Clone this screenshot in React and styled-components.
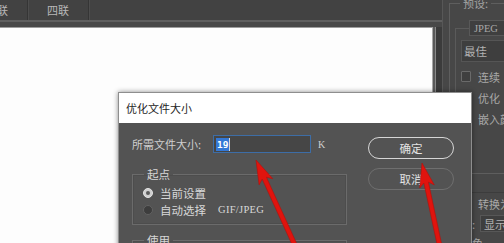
import React from 'react';
import styled, { createGlobalStyle } from 'styled-components';

const Global = createGlobalStyle`
  html, body { margin: 0; padding: 0; background: #3c3c3c; overflow: hidden; }
  body { font-family: "Noto Sans CJK SC", "Noto Sans", sans-serif; }
`;

const CJK = `"Noto Sans CJK SC", "Noto Sans", sans-serif`;
const LATIN = `"Liberation Serif", "Noto Sans CJK SC", serif`;

const Page = styled.div`
  position: relative;
  width: 504px;
  height: 243px;
  overflow: hidden;
  display: grid;
  grid-template-columns: 442px 62px;
  background: #3a3a3a;
`;

const Main = styled.div`
  display: flex;
  flex-direction: column;
  min-width: 0;
  overflow: hidden;
`;

const TabBar = styled.div`
  height: 20px;
  flex: none;
  display: flex;
  background: #424242;
  border-bottom: 2px solid #5f5f5f;
`;

const Tab = styled.div`
  flex: none;
  width: 60px;
  margin-left: ${p => p.$offset || 0}px;
  display: flex;
  align-items: center;
  justify-content: center;
  font-family: ${CJK};
  font-size: 11px;
  color: #b8b8b8;
  border-right: 1px solid #353535;
  box-shadow: 1px 0 0 #4d4d4d;
`;

const Strip = styled.div`
  height: 5px;
  flex: none;
  background: #484848;
`;

const CanvasWrap = styled.div`
  flex: 1;
  display: flex;
  padding-right: 9px;
  background: #3b3b3b;
`;

const Canvas = styled.div`
  flex: 1;
  background: #fdfdfd;
  border-top: 1px solid #9c9c9c;
  border-right: 1px solid #a8a8a8;
  box-shadow: 2px 0 0 #5a5a5a, 3px 0 0 #8a8a8a;
`;

const Side = styled.div`
  background: #474747;
  border-left: 1px solid #575757;
  overflow: hidden;
  padding-left: 6px;
  display: flex;
  flex-direction: column;
  font-family: ${CJK};
  font-size: 11px;
  color: #a9a9a9;
`;

const OuterSet = styled.fieldset`
  flex: none;
  margin: -4px 0 0 0;
  padding: 0 0 6px 5px;
  border: 1px solid #5e5e5e;
  border-right: none;
  min-width: 0;
  height: 178px;
  box-sizing: border-box;
`;

const PlainLegend = styled.legend`
  margin-left: 5px;
  padding: 0 3px;
  line-height: 14px;
  font-size: 11px;
  color: #a4a4a4;
`;

const InnerSet = styled.fieldset`
  margin: 10px 0 0 0;
  padding: 0 0 0 5px;
  border: 1px solid #5a5a5a;
  border-right: none;
  border-bottom: none;
  min-width: 0;
`;

const BoxLegend = styled.legend`
  margin-left: 8px;
  padding: 0 7px 0 4px;
  height: 16px;
  box-sizing: border-box;
  display: flex;
  align-items: center;
  background: #3f3f3f;
  border: 1px solid #585858;
  font-family: ${LATIN};
  font-size: 10.5px;
  color: #a8a8a8;
  width: 60px;
`;

const SelectBox = styled.div`
  margin-top: 4px;
  height: 22px;
  width: 60px;
  box-sizing: border-box;
  display: flex;
  align-items: center;
  padding-left: 2px;
  background: #3e3e3e;
  border: 1px solid #555;
  color: #b2b2b2;
  font-size: 11.5px;
`;

const CheckRow = styled.div`
  flex: none;
  height: 21px;
  display: flex;
  align-items: center;
  gap: 7px;
  margin-top: ${p => p.$first ? 4 : 0}px;
  white-space: nowrap;
`;

const CheckBox = styled.span`
  flex: none;
  width: 10px;
  height: 11px;
  box-sizing: border-box;
  border: 1px solid #6a6a6a;
  border-radius: 1px;
  background: #3f3f3f;
`;

const Lower = styled.div`
  flex: none;
  margin-top: 18px;
  border-top: 1px solid #3c3c3c;
  padding-left: 12px;
  display: flex;
  flex-direction: column;
`;

const FieldRow = styled.div`
  flex: none;
  height: 19px;
  display: flex;
  align-items: center;
  gap: 5px;
  white-space: nowrap;
`;

const SmallSelect = styled.span`
  height: 17px;
  width: 40px;
  box-sizing: border-box;
  padding-left: 3px;
  display: flex;
  align-items: center;
  background: #3e3e3e;
  border: 1px solid #575757;
  color: #b4b4b4;
`;

/* ---------- dialog ---------- */

const Dialog = styled.div`
  position: absolute;
  left: 118px;
  top: 92px;
  width: 354px;
  height: 170px;
  box-sizing: border-box;
  z-index: 2;
  background: #535353;
  border: 1px solid #8e8e8e;
  border-bottom: none;
  box-shadow: 0 0 5px rgba(0, 0, 0, 0.45);
  display: flex;
  flex-direction: column;
  font-family: ${CJK};
  font-size: 11px;
  color: #d4d4d4;
`;

const TitleBar = styled.div`
  height: 30px;
  flex: none;
  display: flex;
  align-items: center;
  padding-left: 7px;
  background: #ffffff;
  color: #1e1e1e;
  font-size: 11px;
`;

const Body = styled.div`
  display: flex;
  gap: 21px;
  padding: 12px 16px 0 13px;
`;

const LeftCol = styled.div`
  width: 215px;
  flex: none;
  display: flex;
  flex-direction: column;
`;

const SizeRow = styled.div`
  height: 18px;
  display: flex;
  align-items: center;
`;

const SizeLabel = styled.span`
  width: 81px;
  flex: none;
  white-space: nowrap;
  color: #cfcfcf;
`;

const Input = styled.div`
  width: 98px;
  height: 18px;
  box-sizing: border-box;
  flex: none;
  display: flex;
  align-items: center;
  padding-left: 2px;
  background: #464646;
  border: 1px solid #3d6da6;
`;

const Selected = styled.span`
  background: #3478d6;
  color: #ffffff;
  font-family: "DejaVu Sans Mono", monospace;
  font-weight: bold;
  font-size: 9.5px;
  line-height: 13px;
  padding: 0 1px;
`;

const Caret = styled.span`
  width: 1px;
  height: 13px;
  background: #d8d8d8;
`;

const Unit = styled.span`
  margin-left: 7px;
  font-family: ${LATIN};
  font-size: 10px;
  color: #cfcfcf;
`;

const Group = styled.fieldset`
  margin: ${p => p.$top}px 0 0 0;
  padding: 3px 0 6px 10px;
  border: 1px solid #6b6b6b;
  min-width: 0;
  box-shadow: inset 0 0 0 1px #4d4d4d;
`;

const GroupLegend = styled.legend`
  margin-left: 1px;
  padding: 0 3px;
  line-height: 14px;
  font-size: 11.5px;
  color: #d6d6d6;
`;

const RadioRow = styled.label`
  height: 17px;
  display: flex;
  align-items: center;
  gap: 7px;
  font-size: 11.5px;
  color: #d8d8d8;
  white-space: nowrap;
`;

const Radio = styled.span`
  flex: none;
  width: 10px;
  height: 10px;
  box-sizing: border-box;
  border-radius: 50%;
  display: flex;
  align-items: center;
  justify-content: center;
  background: ${p => p.$on ? '#cfcfcf' : '#3d3d3d'};
  border: 1px solid ${p => p.$on ? '#e4e4e4' : '#626262'};
  &::after {
    content: '';
    width: 4px;
    height: 4px;
    border-radius: 50%;
    background: ${p => p.$on ? '#5a5a5a' : 'transparent'};
  }
`;

const Latin = styled.span`
  font-family: ${LATIN};
  font-size: 10.5px;
  letter-spacing: 0.3px;
  margin-left: 5px;
`;

const BtnCol = styled.div`
  display: flex;
  flex-direction: column;
  gap: 9px;
  padding-top: 2px;
`;

const Button = styled.div`
  width: 86px;
  height: 22px;
  box-sizing: border-box;
  border-radius: 11px;
  display: flex;
  align-items: center;
  justify-content: center;
  font-size: 11.5px;
  color: #e4e4e4;
  border: ${p => p.$primary ? '1.5px solid #d6d6d6' : '1px solid #6f6f6f'};
`;

const ArrowLayer = styled.svg`
  position: absolute;
  left: 0;
  top: 0;
  z-index: 3;
  pointer-events: none;
`;

function Arrow({ tail, tip }) {
  const dx = tip[0] - tail[0];
  const dy = tip[1] - tail[1];
  const len = Math.hypot(dx, dy);
  const ux = dx / len, uy = dy / len;
  const nx = -uy, ny = ux;
  const hl = 24, hw = 7.5, sw = 2.3;
  const bx = tip[0] - ux * hl, by = tip[1] - uy * hl;
  const nbx = tip[0] - ux * (hl - 4), nby = tip[1] - uy * (hl - 4);
  const pts = [
    [tip[0], tip[1]],
    [bx + nx * hw, by + ny * hw],
    [nbx + nx * sw, nby + ny * sw],
    [tail[0] + nx * sw, tail[1] + ny * sw],
    [tail[0] - nx * sw, tail[1] - ny * sw],
    [nbx - nx * sw, nby - ny * sw],
    [bx - nx * hw, by - ny * hw],
  ].map(p => p.map(v => v.toFixed(1)).join(',')).join(' ');
  return <polygon points={pts} fill="#e0140e" stroke="#b50f0a" strokeWidth="0.6" strokeLinejoin="round" />;
}

export default function App() {
  return (
    <>
      <Global />
      <Page>
        <Main>
          <TabBar>
            <Tab $offset={-33}>双联</Tab>
            <Tab>四联</Tab>
          </TabBar>
          <Strip />
          <CanvasWrap>
            <Canvas />
          </CanvasWrap>
        </Main>
        <Side>
          <OuterSet>
            <PlainLegend>预设:</PlainLegend>
            <InnerSet>
              <BoxLegend>JPEG</BoxLegend>
              <SelectBox>最佳</SelectBox>
              <CheckRow $first><CheckBox />连续</CheckRow>
              <CheckRow><CheckBox />优化</CheckRow>
              <CheckRow><CheckBox />嵌入颜色</CheckRow>
            </InnerSet>
          </OuterSet>
          <Lower>
            <CheckRow><CheckBox />转换为</CheckRow>
            <FieldRow>页: <SmallSelect>显示</SmallSelect></FieldRow>
            <FieldRow>颜色</FieldRow>
          </Lower>
        </Side>

        <Dialog>
          <TitleBar>优化文件大小</TitleBar>
          <Body>
            <LeftCol>
              <SizeRow>
                <SizeLabel>所需文件大小:</SizeLabel>
                <Input><Selected>19</Selected><Caret /></Input>
                <Unit>K</Unit>
              </SizeRow>
              <Group $top={14}>
                <GroupLegend>起点</GroupLegend>
                <RadioRow><Radio $on />当前设置</RadioRow>
                <RadioRow><Radio />自动选择<Latin>GIF/JPEG</Latin></RadioRow>
              </Group>
              <Group $top={8}>
                <GroupLegend>使用</GroupLegend>
                <RadioRow>&nbsp;</RadioRow>
              </Group>
            </LeftCol>
            <BtnCol>
              <Button $primary>确定</Button>
              <Button>取消</Button>
            </BtnCol>
          </Body>
        </Dialog>

        <ArrowLayer width="504" height="243" viewBox="0 0 504 243">
          <Arrow tail={[298, 252]} tip={[256, 160]} />
          <Arrow tail={[441, 252]} tip={[422, 163]} />
        </ArrowLayer>
      </Page>
    </>
  );
}
